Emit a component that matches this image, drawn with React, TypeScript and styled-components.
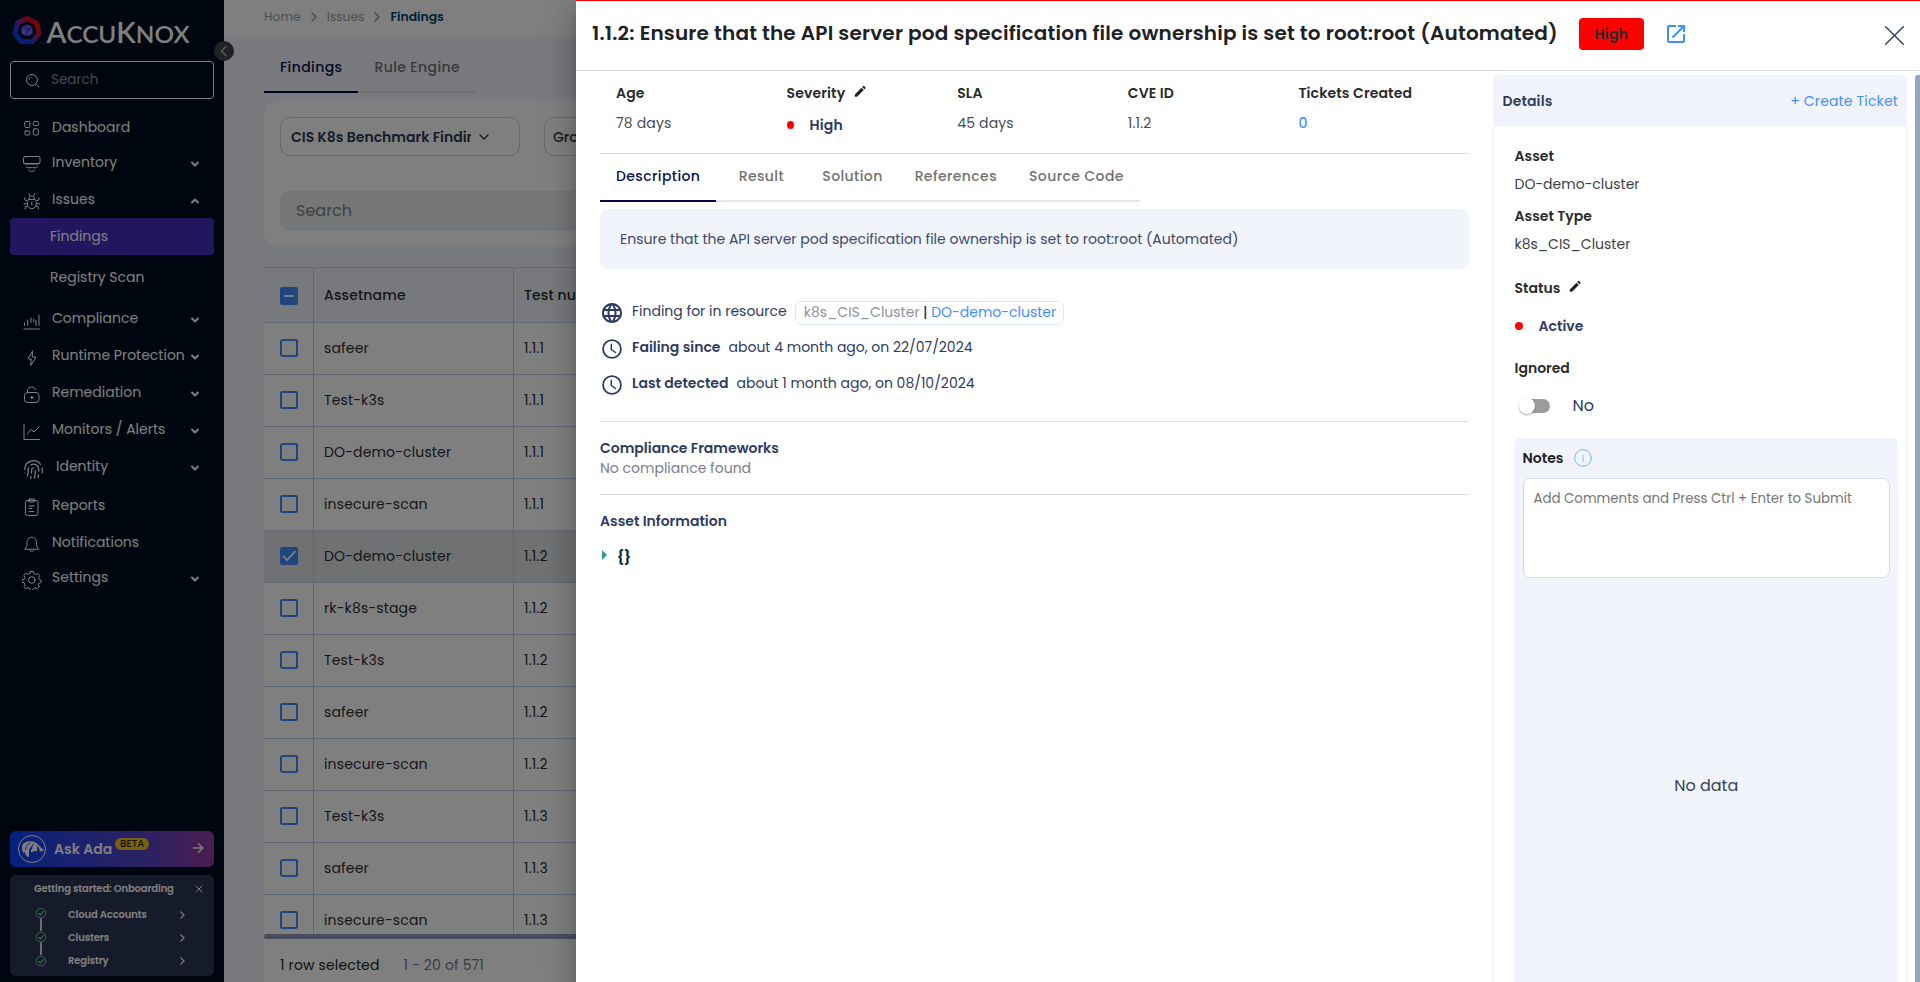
import React from "react";
import styled, { createGlobalStyle } from "styled-components";
import { MdOpenInNew, MdEdit, MdLanguage } from "react-icons/md";
import { Fingerprint } from "lucide-react";

const GlobalStyle = createGlobalStyle`
  * { box-sizing: border-box; }
  body { margin: 0; font-family: Poppins, Inter, "Open Sans", sans-serif; overflow: hidden; }
`;

const navy = "#2f3c5e";
const blue = "#448eff";
const line = "#dcdddf";
const tint = "#f1f4fa";

/* Base text: size, weight, tracking, colour and optical lift vary by use. */
const Text = styled.span<{ $size?: number; $weight?: number; $track?: number; $color?: string; $lift?: number }>`
  font-size: ${(p) => p.$size ?? 14}px;
  font-weight: ${(p) => p.$weight ?? 400};
  letter-spacing: ${(p) => p.$track ?? 0}px;
  color: ${(p) => p.$color ?? "inherit"};
  margin-top: ${(p) => p.$lift ?? 0}px;
  line-height: 20px;
  white-space: nowrap;
`;

const Page = styled.div`
  position: relative;
  display: flex;
  width: 1920px;
  height: 982px;
  overflow: hidden;
  background: #f1f3fa;
`;

/* ---------- Sidebar ---------- */

const Sidebar = styled.aside`
  display: flex;
  flex-direction: column;
  flex: none;
  width: 224px;
  height: 982px;
  padding: 14px 10px 6px;
  background: #000c1f;
  color: #fff;
`;

const Brand = styled.div`
  height: 47px;
  padding-left: 2px;
  svg { display: block; }
`;

const NavSearch = styled.div`
  display: flex;
  align-items: center;
  height: 38px;
  padding-left: 14px;
  gap: 11px;
  border: 1px solid #fff;
  border-radius: 4px;
  margin-bottom: 11px;
`;

const NavItem = styled.div<{ $top?: number; $indent?: number }>`
  display: flex;
  align-items: center;
  flex: none;
  height: 34px;
  margin-top: ${(p) => p.$top ?? 3}px;
  padding: 0 14px 0 ${(p) => p.$indent ?? 12}px;
`;

const NavIcon = styled.span<{ $gap?: number }>`
  display: flex;
  flex: none;
  width: 20px;
  height: 20px;
  margin: 6px ${(p) => p.$gap ?? 10}px 0 0;
  svg { flex: none; }
`;

const NavArrow = styled.span`
  display: flex;
  margin: 3px 0 0 auto;
`;

const NavChild = styled.div<{ $active?: boolean; $top: number; $height: number }>`
  display: flex;
  align-items: center;
  flex: none;
  height: ${(p) => p.$height}px;
  margin-top: ${(p) => p.$top}px;
  padding-left: 40px;
  border-radius: 4px;
  background: ${(p) => (p.$active ? "#442fbc" : "transparent")};
`;

const AskAda = styled.div`
  display: flex;
  align-items: center;
  flex: none;
  height: 36px;
  gap: 8px;
  margin-top: auto;
  padding: 0 10px 0 8px;
  border-radius: 6px;
  background: linear-gradient(90deg, #0a45fa 0%, #2a43e6 22%, #5a42c4 68%, #943ca0 100%);
`;

const Beta = styled.span`
  display: flex;
  align-items: center;
  justify-content: center;
  width: 34px;
  height: 12px;
  margin: -10px auto 0 -5px;
  border-radius: 6px;
  background: #f5c518;
  color: #1b1b1b;
  font-size: 10px;
  font-weight: 500;
`;

const Onboarding = styled.div`
  flex: none;
  height: 101px;
  margin-top: 8px;
  border-radius: 6px;
  background: #2b3654;
`;

const OnboardingHead = styled.div`
  display: flex;
  align-items: center;
  justify-content: space-between;
  height: 27px;
  padding: 0 11px 0 24px;
`;

const OnboardingBody = styled.div`
  display: flex;
  padding-left: 25px;
  > svg { margin-top: 5px; }
`;

const StepList = styled.div`
  display: flex;
  flex-direction: column;
  width: 117px;
  margin: 1px 0 0 21px;
`;

const Step = styled.div`
  display: flex;
  align-items: center;
  justify-content: space-between;
  height: 23.3px;
`;

const CollapseButton = styled.div`
  position: absolute;
  left: 214px;
  top: 41px;
  display: flex;
  align-items: center;
  justify-content: center;
  width: 20px;
  height: 20px;
  border-radius: 50%;
  background: #40444f;
`;

/* ---------- Findings page ---------- */

const Main = styled.main`
  display: flex;
  flex-direction: column;
  flex: 1;
  height: 982px;
  min-width: 0;
`;

const Breadcrumb = styled.div`
  display: flex;
  align-items: center;
  flex: none;
  height: 37px;
  padding: 0 0 3px 40px;
  background: #fff;
  svg { margin: 0 10px; }
`;

const Content = styled.div`
  display: flex;
  flex-direction: column;
  flex: 1;
  padding-left: 40px;
  min-height: 0;
`;

const Tabs = styled.div<{ $height: number }>`
  display: flex;
  align-self: flex-start;
  width: max-content;
  height: ${(p) => p.$height}px;
  box-shadow: inset 0 -2px 0 #e1e5f2;
`;

const Tab = styled.div<{ $active?: boolean; $shift: number }>`
  display: flex;
  align-items: center;
  justify-content: center;
  min-width: 90px;
  padding: ${(p) => Math.max(p.$shift, 0)}px 16px ${(p) => Math.max(-p.$shift, 0)}px;
  color: ${(p) => (p.$active ? "#0a1550" : "#707173")};
  box-shadow: ${(p) => (p.$active ? "inset 0 -2px 0 #000b42" : "none")};
`;

const FilterCard = styled.section`
  flex: none;
  height: 147px;
  margin: 7px 0 20px;
  padding: 17px 16px;
  border-radius: 14px 0 0 14px;
  background: #fff;
`;

const FilterRow = styled.div`
  display: flex;
  gap: 24px;
  margin-bottom: 35px;
`;

const Select = styled.div<{ $left: number }>`
  display: flex;
  align-items: center;
  flex: none;
  width: 240px;
  height: 39px;
  gap: 7px;
  padding-left: ${(p) => p.$left}px;
  border: 1px solid #c9d0e0;
  border-radius: 10px;
  color: #2c3852;
`;

const SelectValue = styled.div`
  width: 180px;
  overflow: hidden;
`;

const SearchField = styled.div`
  display: flex;
  align-items: center;
  height: 40px;
  padding: 0 16px;
  border-radius: 10px;
  background: #eceef3;
`;

const Table = styled.section`
  flex: none;
  height: 667px;
  overflow: hidden;
  border-top: 1px solid #ccd6ee;
`;

const Row = styled.div<{ $head?: boolean; $selected?: boolean }>`
  display: grid;
  grid-template-columns: 50px 200px 1fr;
  height: ${(p) => (p.$head ? 55 : 52)}px;
  border-bottom: 1px solid #c3cfe9;
  background: ${(p) => (p.$head ? "transparent" : p.$selected ? "#e1e2e5" : "#fff")};
  color: #2b2c30;
`;

const Cell = styled.div<{ $first?: boolean; $last?: boolean; $head?: boolean }>`
  display: flex;
  align-items: center;
  padding: ${(p) => (p.$head ? 2 : 0)}px 0 ${(p) => (p.$head ? 0 : 2)}px ${(p) => (p.$first ? 16 : 10)}px;
  border-right: ${(p) => (p.$last ? 0 : 1)}px solid #c3cfe9;
`;

const Checkbox = styled.span<{ $on?: boolean }>`
  display: flex;
  width: 18px;
  height: 18px;
  border: 2px solid #408cff;
  border-radius: 2px;
  background: ${(p) => (p.$on ? "#408cff" : "transparent")};
  svg { margin: -2px; flex: none; }
`;

const TableScroll = styled.div`
  flex: none;
  height: 5px;
  border-radius: 3px 0 0 3px;
  background: #909dbc;
`;

const TableFooter = styled.div`
  display: flex;
  align-items: center;
  flex: 1;
  gap: 24px;
  padding: 9px 16px 0;
  background: #fff;
`;

/* ---------- Drawer ---------- */

const Overlay = styled.div`
  position: absolute;
  inset: 0;
  background: rgba(0, 0, 0, 0.5);
`;

const Drawer = styled.div`
  position: absolute;
  top: 0;
  right: 0;
  display: flex;
  flex-direction: column;
  width: 1344px;
  height: 982px;
  border-top: 1px solid #f00;
  background: #fff;
  box-shadow: 0 8px 10px -5px rgba(0, 0, 0, 0.2), 0 16px 24px 2px rgba(0, 0, 0, 0.14),
    0 6px 30px 5px rgba(0, 0, 0, 0.12);
`;

const DrawerHead = styled.header`
  display: flex;
  align-items: center;
  flex: none;
  height: 70px;
  padding: 0 16px 4px;
  border-bottom: 1px solid ${line};
`;

const SeverityBadge = styled.span`
  display: flex;
  align-items: center;
  justify-content: center;
  width: 65px;
  height: 32px;
  margin: 1px 20px 0 21px;
  border-radius: 4px;
  background: #f00;
`;

const CloseButton = styled.span`
  display: flex;
  margin: 4px 0 0 auto;
`;

const DrawerBody = styled.div`
  display: flex;
  flex: 1;
  min-height: 0;
`;

const Finding = styled.section`
  width: 869px;
  margin-left: 24px;
`;

const Stats = styled.div`
  display: grid;
  grid-template-columns: repeat(5, 1fr);
  height: 83px;
  padding: 12px 0 0 16px;
  border-bottom: 1px solid ${line};
`;

const Stat = styled.div`
  display: flex;
  flex-direction: column;
  gap: 10px;
`;

const Inline = styled.div<{ $gap: number; $top?: number }>`
  display: flex;
  align-items: center;
  gap: ${(p) => p.$gap}px;
  margin-top: ${(p) => p.$top ?? 0}px;
`;

const Pencil = styled(MdEdit)`
  margin-top: -3px;
  font-size: 14.5px;
  color: #222;
`;

const Dot = styled.span<{ $size: number }>`
  width: ${(p) => p.$size}px;
  height: 8px;
  border-radius: 50%;
  background: #f00;
`;

const DescriptionBox = styled.div`
  display: flex;
  align-items: center;
  height: 60px;
  margin: 7px 0 32px;
  padding: 0 20px;
  border-radius: 8px;
  background: ${tint};
`;

const Facts = styled.div`
  height: 121px;
  border-bottom: 1px solid ${line};
`;

const Fact = styled.div`
  display: flex;
  align-items: center;
  height: 24px;
  margin-bottom: 12px;
  padding-left: 1px;
  color: ${navy};
`;

const FactIcon = styled.span`
  display: flex;
  justify-content: center;
  width: 22px;
  margin: -1px 9px 0 0;
  color: #2b3a60;
  svg { flex: none; }
`;

const ResourcePill = styled.span`
  display: flex;
  align-items: center;
  gap: 3.5px;
  height: 24px;
  margin-left: 8px;
  padding: 0 7px 0 8px;
  border: 1px solid #d8e7fc;
  border-radius: 7px;
`;

const Compliance = styled.div`
  display: flex;
  flex-direction: column;
  height: 73px;
  padding-top: 16px;
  border-bottom: 1px solid ${line};
`;

const AssetInfo = styled.div`
  display: flex;
  flex-direction: column;
  gap: 16px;
  padding-top: 16px;
`;

const JsonNode = styled.div`
  display: flex;
  align-items: center;
  gap: 10px;
  padding-left: 2px;
  svg { margin-top: -4px; }
`;

const Details = styled.aside`
  display: flex;
  flex-direction: column;
  width: 414px;
  margin: 4px 0 0 24px;
  border: solid ${tint};
  border-width: 0 1px;
  border-radius: 6px 6px 0 0;
`;

const DetailsHead = styled.div`
  display: flex;
  align-items: center;
  justify-content: space-between;
  flex: none;
  height: 51px;
  padding: 0 8px 0 8.5px;
  border-radius: 6px 6px 0 0;
  background: ${tint};
`;

const DetailsBody = styled.div`
  display: flex;
  flex-direction: column;
  flex: 1;
  padding: 20px 8px 0 20.5px;
  color: #2a2a2c;
`;

const Field = styled.div<{ $gap: number; $after: number }>`
  display: flex;
  flex-direction: column;
  align-items: flex-start;
  gap: ${(p) => p.$gap}px;
  margin-bottom: ${(p) => p.$after}px;
`;

const Toggle = styled.span`
  display: flex;
  align-items: center;
  width: 31px;
  height: 14px;
  border-radius: 7px;
  margin-left: 4px;
  background: linear-gradient(90deg, transparent 6px, #9b9b9b 6px);
`;

const Thumb = styled.span`
  width: 16px;
  height: 16px;
  border-radius: 50%;
  background: #fff;
  box-shadow: 0 1px 2px rgba(0, 0, 0, 0.35);
`;

const Notes = styled.div`
  display: flex;
  flex-direction: column;
  flex: 1;
  margin-left: -0.5px;
  padding: 10px 8px 0 8.5px;
  border-radius: 6px 6px 0 0;
  background: ${tint};
`;

const CommentBox = styled.div`
  height: 100px;
  margin-top: 10px;
  padding: 9px 10px;
  border: 1px solid #d5dbe9;
  border-radius: 7px;
  background: #fff;
`;

const CommentHint = styled(Text)`
  display: block;
  margin-top: 1px;
`;

const Empty = styled.div`
  display: flex;
  align-items: center;
  justify-content: center;
  height: 415px;
`;

const DrawerScroll = styled.div`
  width: 5px;
  margin: 4px 0 0 auto;
  border-radius: 3px 0 0 0;
  background: #98a3bc;
`;

/* ---------- Icons ---------- */

type IconProps = { children: React.ReactNode; size?: number; box?: number; stroke?: number; color?: string };
const Icon = ({ children, size = 20, box = 20, stroke = 1, color = "currentColor" }: IconProps) => (
  <svg width={size} height={size} viewBox={`0 0 ${box} ${box}`} fill="none" stroke={color}
    strokeWidth={stroke} strokeLinecap="round" strokeLinejoin="round">{children}</svg>
);

const Arrow = ({ up }: { up?: boolean }) => (
  <Icon size={10} box={10} stroke={2}><path d={up ? "M2 6.5 5 3.5 8 6.5" : "M2 3.5 5 6.5 8 3.5"} /></Icon>
);

const Next = ({ h = 10, color = "#fff", stroke = 1.5 }) => (
  <svg width={h * 0.6} height={h} viewBox="0 0 6 10" fill="none" stroke={color} strokeWidth={stroke}
    strokeLinecap="round" strokeLinejoin="round"><path d="M1 1l4 4-4 4" /></svg>
);

const icons = {
  dashboard: <Icon><rect x="2.8" y="1.5" width="5" height="6" rx="1" /><rect x="11.3" y="1.5" width="5" height="4" rx="1" /><rect x="2.8" y="11" width="5" height="4" rx="1" /><rect x="11.3" y="8.8" width="5" height="6.2" rx="1" /></Icon>,
  inventory: <Icon><rect x="1.5" y="1.500" width="16.500" height="7.500" rx="2" /><path d="M2 8.500h15.500M4 11.500c.3 1 1 1.200 1.800 1.200h8c.8 0 1.500-.2 1.800-1.200M7 15c.2 1 .8 1.300 1.500 1.300h2.500c.7 0 1.300-.3 1.500-1.300" /></Icon>,
  bug: <Icon><path d="M6.500 7.500h6.500c1 1.200 1.300 2.800 1.300 4.200 0 3-2 5-4.500 5s-4.500-2-4.500-5c0-1.400.3-3 1.200-4.200zM7 7.200c0-2 1-3.200 2.800-3.200s2.800 1.200 2.800 3.200M7.800 4 6.800 1.500M11.800 4l1-2.500M9.800 10v3M5.200 9 2.800 8V5.800M14.400 9l2.400-1V5.800M5 11.700H2M14.500 11.700h3M5.700 14l-2.500 1v2M13.900 14l2.500 1v2" /></Icon>,
  compliance: <Icon><path d="M2.500 12v2.500M5.700 9v5.500M9 7v4.500M11.800 8v3M14 9.500v5M17 4v10.500M2 18h15.500" /></Icon>,
  bolt: <Icon><path d="M10.500 3 6 11h3.300l-.6 6.500L14 9h-3.500z" /></Icon>,
  lock: <Icon><rect x="2.500" y="7.500" width="14.500" height="10" rx="3" /><path d="M5.500 7.500V6c0-2.300 1.700-4 4.200-4 2 0 3.500 1 4 2.700" /><circle cx="9.800" cy="12.500" r="1" fill="currentColor" /></Icon>,
  chart: <Icon><path d="M2 2v15.500h15.500M5.500 11.500l3.500-4 3 2.500 5-5" /></Icon>,
  reports: <Icon><rect x="3.500" y="2.500" width="12.500" height="15" rx="2" /><rect x="6.500" y="1" width="6.500" height="3" rx="1.300" /><path d="M7 8h5.500M7 10.500h3M7 13.500h4.500" /></Icon>,
  bell: <Icon><path d="M3 14c1.500-1.500 2-3 2-6.500 0-3 2-5.300 4.800-5.300s4.700 2.300 4.700 5.300c0 3.500.5 5 2 6.500zM7.500 14.500c.4 1.500 1.200 2 2.300 2s1.900-.5 2.300-2" /></Icon>,
  gear: <Icon box={24}><g strokeWidth="1.200"><circle cx="11.800" cy="12" r="4" /><path d="M10 1.800h3.600l.8 2.900 2 .9 2.700-1.500 2.200 2.600-1.300 2.600.7 2 2.300 1v2.500l-2.500.9-.9 2 1.200 2.700-2.400 2.200-2.600-1.300-2.200.9-.9 2.500h-2.500l-.9-2.600-2-.9-2.700 1.300-2.300-2.400 1.300-2.600-.9-2.100-2.600-.9v-2.600l2.600-.9.9-2.100-1.300-2.600 2.400-2.400 2.700 1.400 2-.9z" /></g></Icon>,
};

const Clock = () => (
  <Icon size={20} box={20} stroke={1.800}><circle cx="10" cy="10" r="8.900" /><path strokeWidth="1.500" d="M9.300 5.300v5.200l4.200 3" /></Icon>
);

const AccuKnoxLogo = () => (
  <svg width="190" height="34" viewBox="0 0 190 34">
    <defs>
      <linearGradient id="ring" x1="0" y1="1" x2="1" y2="0">
        <stop offset="0.25" stopColor="#0a3cf0" /><stop offset="0.5" stopColor="#6a2a9a" /><stop offset="0.75" stopColor="#e00a28" />
      </linearGradient>
    </defs>
    <path d="M15 4.500 24.700 9.200l2.300 10.300L20.500 27.700h-11L3 19.500 5.300 9.200z" fill="none" stroke="url(#ring)" strokeWidth="5" strokeLinejoin="round" />
    <path d="M15 10.500l5.500 2.600v6.300L15 22.500l-5.500-3.100v-6.300z" fill="#7468ff" />
    <path d="M9.500 13.100l5.500 2.700 5.500-2.700M15 15.800v6.700M12.200 11.800l5.600 2.700v3" fill="none" stroke="#1a1766" strokeWidth=".8" />
    <text x="34.500" y="29" textLength="143" lengthAdjust="spacingAndGlyphs" fill="#fff" fontFamily="Lato, sans-serif" fontWeight="600" fontSize="23.500">
      <tspan fontSize="28">A</tspan>CCU<tspan fontSize="28">K</tspan>NOX
    </text>
  </svg>
);

const AdaAvatar = () => (
  <svg width="28" height="28" viewBox="0 0 28 28">
    <circle cx="14" cy="14" r="13.500" fill="none" stroke="#fff" strokeWidth="1" />
    <path d="M4 12c0-3 3-5 6-5.500 4-.7 8 .5 10.500 3.500 1.800 2 3.500 3.500 5.500 4.500l-1.500 1.500-2.500.5c-.5-3-1.500-5-3.500-6 .8 2 1 3.500.5 5.500-1 .3-2.500.5-3.500.5l-2.500.5c-.3-2.500.5-5 2-7-3 1.500-4.500 5-4 9 .2 1.500 0 2-.5 3.500-2-1.500-3.500-3-3.500-5.500l-1.500 1c-1-1.500-1.500-4-1.500-6z" fill="#fff" />
    <path d="M12 8c-2.500 1.500-4.200 4-4.500 7M16 8.500c-1.500 1.500-2.300 3.500-2.500 6" stroke="#2343e0" strokeWidth="1" fill="none" />
  </svg>
);

const StepTrack = () => (
  <svg width="12" height="64" viewBox="0 0 12 64" fill="none">
    <path d="M6 11.500v12.500M6 35.500V48" stroke="#fff" strokeWidth="1.600" />
    {[6, 30, 54].map((y) => (
      <g key={y} stroke="#66d08c"><circle cx="6" cy={y} r="4.800" strokeWidth="1" /><path d={`M3.500 ${y}l1.900 1.900L9 ${y - 2}`} strokeWidth="1.200" /></g>
    ))}
  </svg>
);

/* ---------- Data ---------- */

type Nav = { label: string; icon: React.ReactNode; top?: number; arrow?: boolean; indent?: number; gap?: number };
const navAfter: Nav[] = [
  { label: "Compliance", icon: icons.compliance, top: 7, arrow: true },
  { label: "Runtime Protection", icon: icons.bolt, arrow: true },
  { label: "Remediation", icon: icons.lock, arrow: true },
  { label: "Monitors / Alerts", icon: icons.chart, arrow: true },
  { label: "Identity", icon: <Fingerprint size={21} strokeWidth={1.400} />, arrow: true, indent: 13, gap: 13 },
  { label: "Reports", icon: icons.reports, top: 5 },
  { label: "Notifications", icon: icons.bell },
  { label: "Settings", icon: icons.gear, top: 1, arrow: true },
];

const rows: [string, string][] = [
  ["safeer", "1.1.1"], ["Test-k3s", "1.1.1"], ["DO-demo-cluster", "1.1.1"], ["insecure-scan", "1.1.1"],
  ["DO-demo-cluster", "1.1.2"], ["rk-k8s-stage", "1.1.2"], ["Test-k3s", "1.1.2"], ["safeer", "1.1.2"],
  ["insecure-scan", "1.1.2"], ["Test-k3s", "1.1.3"], ["safeer", "1.1.3"], ["insecure-scan", "1.1.3"],
];
const selectedRow = 4;

const title = "Ensure that the API server pod specification file ownership is set to root:root (Automated)";
const tabNames = ["Description", "Result", "Solution", "References", "Source Code"];

const NavEntry = ({ item, up }: { item: Nav; up?: boolean }) => (
  <NavItem $top={item.top} $indent={item.indent}>
    <NavIcon $gap={item.gap}>{item.icon}</NavIcon>
    <Text>{item.label}</Text>
    {item.arrow && <NavArrow><Arrow up={up} /></NavArrow>}
  </NavItem>
);

const StatLabel = ({ children }: { children: string }) => <Text $weight={600} $track={0.13} $color="#2a2a2c">{children}</Text>;
const StatValue = ({ children }: { children: string }) => <Text $track={0.17} $color="#444c5c">{children}</Text>;

export default function App() {
  return (
    <>
      <GlobalStyle />
      <Page>
        <Sidebar>
          <Brand><AccuKnoxLogo /></Brand>
          <NavSearch>
            <Icon size={15} box={15}><circle cx="7" cy="7" r="5.500" /><path d="M11.500 11.500l2.500 2.500M4 6.500c.2-1.300 1-2 2.200-2.300" /></Icon>
            <Text $size={13.5} $color="#8e93a1">Search</Text>
          </NavSearch>
          <NavEntry item={{ label: "Dashboard", icon: icons.dashboard, top: 0 }} />
          <NavEntry item={{ label: "Inventory", icon: icons.inventory, top: 1, arrow: true }} />
          <NavEntry item={{ label: "Issues", icon: icons.bug, arrow: true }} up />
          <NavChild $active $top={2} $height={37}><Text $lift={-1}>Findings</Text></NavChild>
          <NavChild $top={5} $height={34}><Text>Registry Scan</Text></NavChild>
          {navAfter.map((item) => <NavEntry key={item.label} item={item} />)}

          <AskAda>
            <AdaAvatar />
            <Text $weight={600}>Ask Ada</Text>
            <Beta>BETA</Beta>
            <Icon size={12} box={12} stroke={1.300} color="#fff"><path d="M1.500 5h9M6.500.7 10.800 5l-4.300 4.300" /></Icon>
          </AskAda>
          <Onboarding>
            <OnboardingHead>
              <Text $size={10} $weight={600} $track={-0.14}>Getting started: Onboarding</Text>
              <Icon size={8} box={8}><path d="M1 1l6 6M7 1 1 7" /></Icon>
            </OnboardingHead>
            <OnboardingBody>
              <StepTrack />
              <StepList>
                {["Cloud Accounts", "Clusters", "Registry"].map((s) => (
                  <Step key={s}><Text $size={10} $weight={600} $track={-0.14}>{s}</Text><Next h={8} /></Step>
                ))}
              </StepList>
            </OnboardingBody>
          </Onboarding>
        </Sidebar>

        <Main>
          <Breadcrumb>
            <Text $size={12.3} $color="#9a9ca4">Home</Text>
            <Next h={10} color="#8c8f98" stroke={1.200} />
            <Text $size={12.3} $color="#9a9ca4">Issues</Text>
            <Next h={10} color="#8c8f98" stroke={1.200} />
            <Text $size={12.4} $weight={600} $color="#00426b">Findings</Text>
          </Breadcrumb>
          <Content>
            <Tabs $height={56}>
              <Tab $active $shift={4}><Text $weight={500} $track={0.4}>Findings</Text></Tab>
              <Tab $shift={4}><Text $weight={500} $track={0.4}>Rule Engine</Text></Tab>
            </Tabs>
            <FilterCard>
              <FilterRow>
                <Select $left={10}>
                  <SelectValue><Text $weight={600}>CIS K8s Benchmark Findings</Text></SelectValue>
                  <Icon size={12} box={12} stroke={1.300}><path d="M2 4l4 4 4-4" /></Icon>
                </Select>
                <Select $left={8}><Text $weight={500}>Group by</Text></Select>
              </FilterRow>
              <SearchField><Text $size={16} $color="#7c7f86">Search</Text></SearchField>
            </FilterCard>
            <Table>
              <Row $head>
                <Cell $first $head><Checkbox $on><Icon size={18} box={18} stroke={2} color="#fff"><path d="M5 9h8" /></Icon></Checkbox></Cell>
                <Cell $head><Text $lift={-2} $weight={500} $track={0.15}>Assetname</Text></Cell>
                <Cell $last $head><Text $lift={-2} $weight={500} $track={0.15}>Test number</Text></Cell>
              </Row>
              {rows.map(([name, test], i) => (
                <Row key={i} $selected={i === selectedRow}>
                  <Cell $first>
                    <Checkbox $on={i === selectedRow}>
                      {i === selectedRow && <Icon size={18} box={18} stroke={1.800} color="#fff"><path d="M3.500 9.500l3.500 3.700 8-8.500" /></Icon>}
                    </Checkbox>
                  </Cell>
                  <Cell><Text $track={0.15}>{name}</Text></Cell>
                  <Cell $last><Text $track={0.15}>{test}</Text></Cell>
                </Row>
              ))}
            </Table>
            <TableScroll />
            <TableFooter>
              <Text $track={0.15} $color="#222">1 row selected</Text>
              <Text $track={0.15} $color="#76787e">1 - 20 of 571</Text>
            </TableFooter>
          </Content>
        </Main>

        <CollapseButton><Icon size={12} box={12} stroke={1.500} color="#b4b6bb"><path d="M8 1.500 3.500 6 8 10.500" /></Icon></CollapseButton>
        <Overlay />

        <Drawer>
          <DrawerHead>
            <Text $size={20} $weight={600} $track={0.18} $lift={-2} $color="#202124">1.1.2: {title}</Text>
            <SeverityBadge><Text $weight={600} $track={0.2} $color="#2a2a2a">High</Text></SeverityBadge>
            <MdOpenInNew size={24} color="#3d8eff" />
            <CloseButton><Icon size={19} box={19} stroke={1.400} color="#2f3e60"><path d="M.7.7l17.600 17.600M18.300.7.7 18.300" /></Icon></CloseButton>
          </DrawerHead>
          <DrawerBody>
            <Finding>
              <Stats>
                <Stat><StatLabel>Age</StatLabel><StatValue>78 days</StatValue></Stat>
                <Stat>
                  <Inline $gap={8}><StatLabel>Severity</StatLabel><Pencil /></Inline>
                  <Inline $gap={16} $top={2}><Dot $size={7} /><Text $weight={600} $track={0.13} $color={navy}>High</Text></Inline>
                </Stat>
                <Stat><StatLabel>SLA</StatLabel><StatValue>45 days</StatValue></Stat>
                <Stat><StatLabel>CVE ID</StatLabel><StatValue>1.1.2</StatValue></Stat>
                <Stat><StatLabel>Tickets Created</StatLabel><Text $weight={500} $color={blue}>0</Text></Stat>
              </Stats>
              <Tabs $height={48}>
                {tabNames.map((name, i) => (
                  <Tab key={name} $active={i === 0} $shift={-4}><Text $weight={500} $track={0.4}>{name}</Text></Tab>
                ))}
              </Tabs>
              <DescriptionBox><Text $color="#404968">{title}</Text></DescriptionBox>
              <Facts>
                <Fact>
                  <FactIcon><MdLanguage size={24} /></FactIcon>
                  <Text $lift={-4}>Finding for in resource</Text>
                  <ResourcePill>
                    <Text $lift={-2} $color="#8e949f">k8s_CIS_Cluster</Text>
                    <Text $lift={-2} $weight={500}>|</Text>
                    <Text $lift={-2} $color={blue}>DO-demo-cluster</Text>
                  </ResourcePill>
                </Fact>
                <Fact>
                  <FactIcon><Clock /></FactIcon>
                  <Inline $gap={8} $top={-4}><Text $weight={600}>Failing since</Text><Text>about 4 month ago, on 22/07/2024</Text></Inline>
                </Fact>
                <Fact>
                  <FactIcon><Clock /></FactIcon>
                  <Inline $gap={8} $top={-4}><Text $weight={600}>Last detected</Text><Text>about 1 month ago, on 08/10/2024</Text></Inline>
                </Fact>
              </Facts>
              <Compliance>
                <Text $weight={600} $color={navy}>Compliance Frameworks</Text>
                <Text $color="#777d8c">No compliance found</Text>
              </Compliance>
              <AssetInfo>
                <Text $weight={600} $color={navy}>Asset Information</Text>
                <JsonNode>
                  <svg width="5" height="10" viewBox="0 0 5 10"><path d="M0 0l5 5-5 5z" fill="#2aa198" /></svg>
                  <Text $weight={700} $color="#073642">{"{}"}</Text>
                </JsonNode>
              </AssetInfo>
            </Finding>

            <Details>
              <DetailsHead>
                <Text $weight={600} $track={0.13} $color={navy}>Details</Text>
                <Text $track={0.15} $color={blue}>+ Create Ticket</Text>
              </DetailsHead>
              <DetailsBody>
                <Field $gap={8} $after={12}><Text $weight={600}>Asset</Text><Text $color="#3c3f46">DO-demo-cluster</Text></Field>
                <Field $gap={8} $after={24}><Text $weight={600}>Asset Type</Text><Text $color="#3c3f46">k8s_CIS_Cluster</Text></Field>
                <Field $gap={18} $after={22}>
                  <Inline $gap={8}><Text $weight={600}>Status</Text><Pencil /></Inline>
                  <Inline $gap={16}><Dot $size={8} /><Text $weight={600} $color={navy}>Active</Text></Inline>
                </Field>
                <Field $gap={18} $after={22}>
                  <Text $weight={600}>Ignored</Text>
                  <Inline $gap={23}><Toggle><Thumb /></Toggle><Text $size={16} $color={navy}>No</Text></Inline>
                </Field>
                <Notes>
                  <Inline $gap={11}>
                    <Text $weight={600} $color="#1f2024">Notes</Text>
                    <Icon size={18} box={18} color="#7fb0fb"><circle cx="9" cy="9" r="8.300" /><path d="M9 8v4.500M9 6.300v.2" /></Icon>
                  </Inline>
                  <CommentBox><CommentHint $size={13.333} $color="#757575">Add Comments and Press Ctrl + Enter to Submit</CommentHint></CommentBox>
                  <Empty><Text $size={16} $color="#3a4258">No data</Text></Empty>
                </Notes>
              </DetailsBody>
            </Details>
            <DrawerScroll />
          </DrawerBody>
        </Drawer>
      </Page>
    </>
  );
}
